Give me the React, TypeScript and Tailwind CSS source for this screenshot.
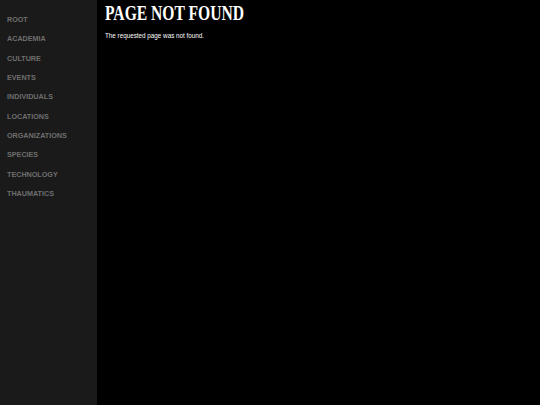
import React from 'react';

const sections = [
  'Root',
  'Academia',
  'Culture',
  'Events',
  'Individuals',
  'Locations',
  'Organizations',
  'Species',
  'Technology',
  'Thaumatics',
];

const App: React.FC = () => {
  return (
    <div className="flex min-h-[405px] w-full bg-black font-['Liberation_Sans',Arial,sans-serif]">
      <nav className="w-[97px] shrink-0 bg-[#1a1a1a] pt-[15px] pl-[7px]">
        <ul className="flex flex-col">
          {sections.map((name) => (
            <li key={name} className="h-[19.33px] text-[7.2px] leading-[9px] font-bold uppercase text-[#6e6e6e]">
              {name}
            </li>
          ))}
        </ul>
      </nav>
      <main className="flex-1 pl-[8px] pt-[2px] text-white">
        <h1 className="origin-left scale-x-[0.78] whitespace-nowrap font-['Liberation_Serif','Times_New_Roman',serif] text-[20px] leading-[22px] font-bold uppercase">
          Page not found
        </h1>
        <p className="mt-[8px] text-[6.3px] leading-[8px]">The requested page was not found.</p>
      </main>
    </div>
  );
};

export default App;
